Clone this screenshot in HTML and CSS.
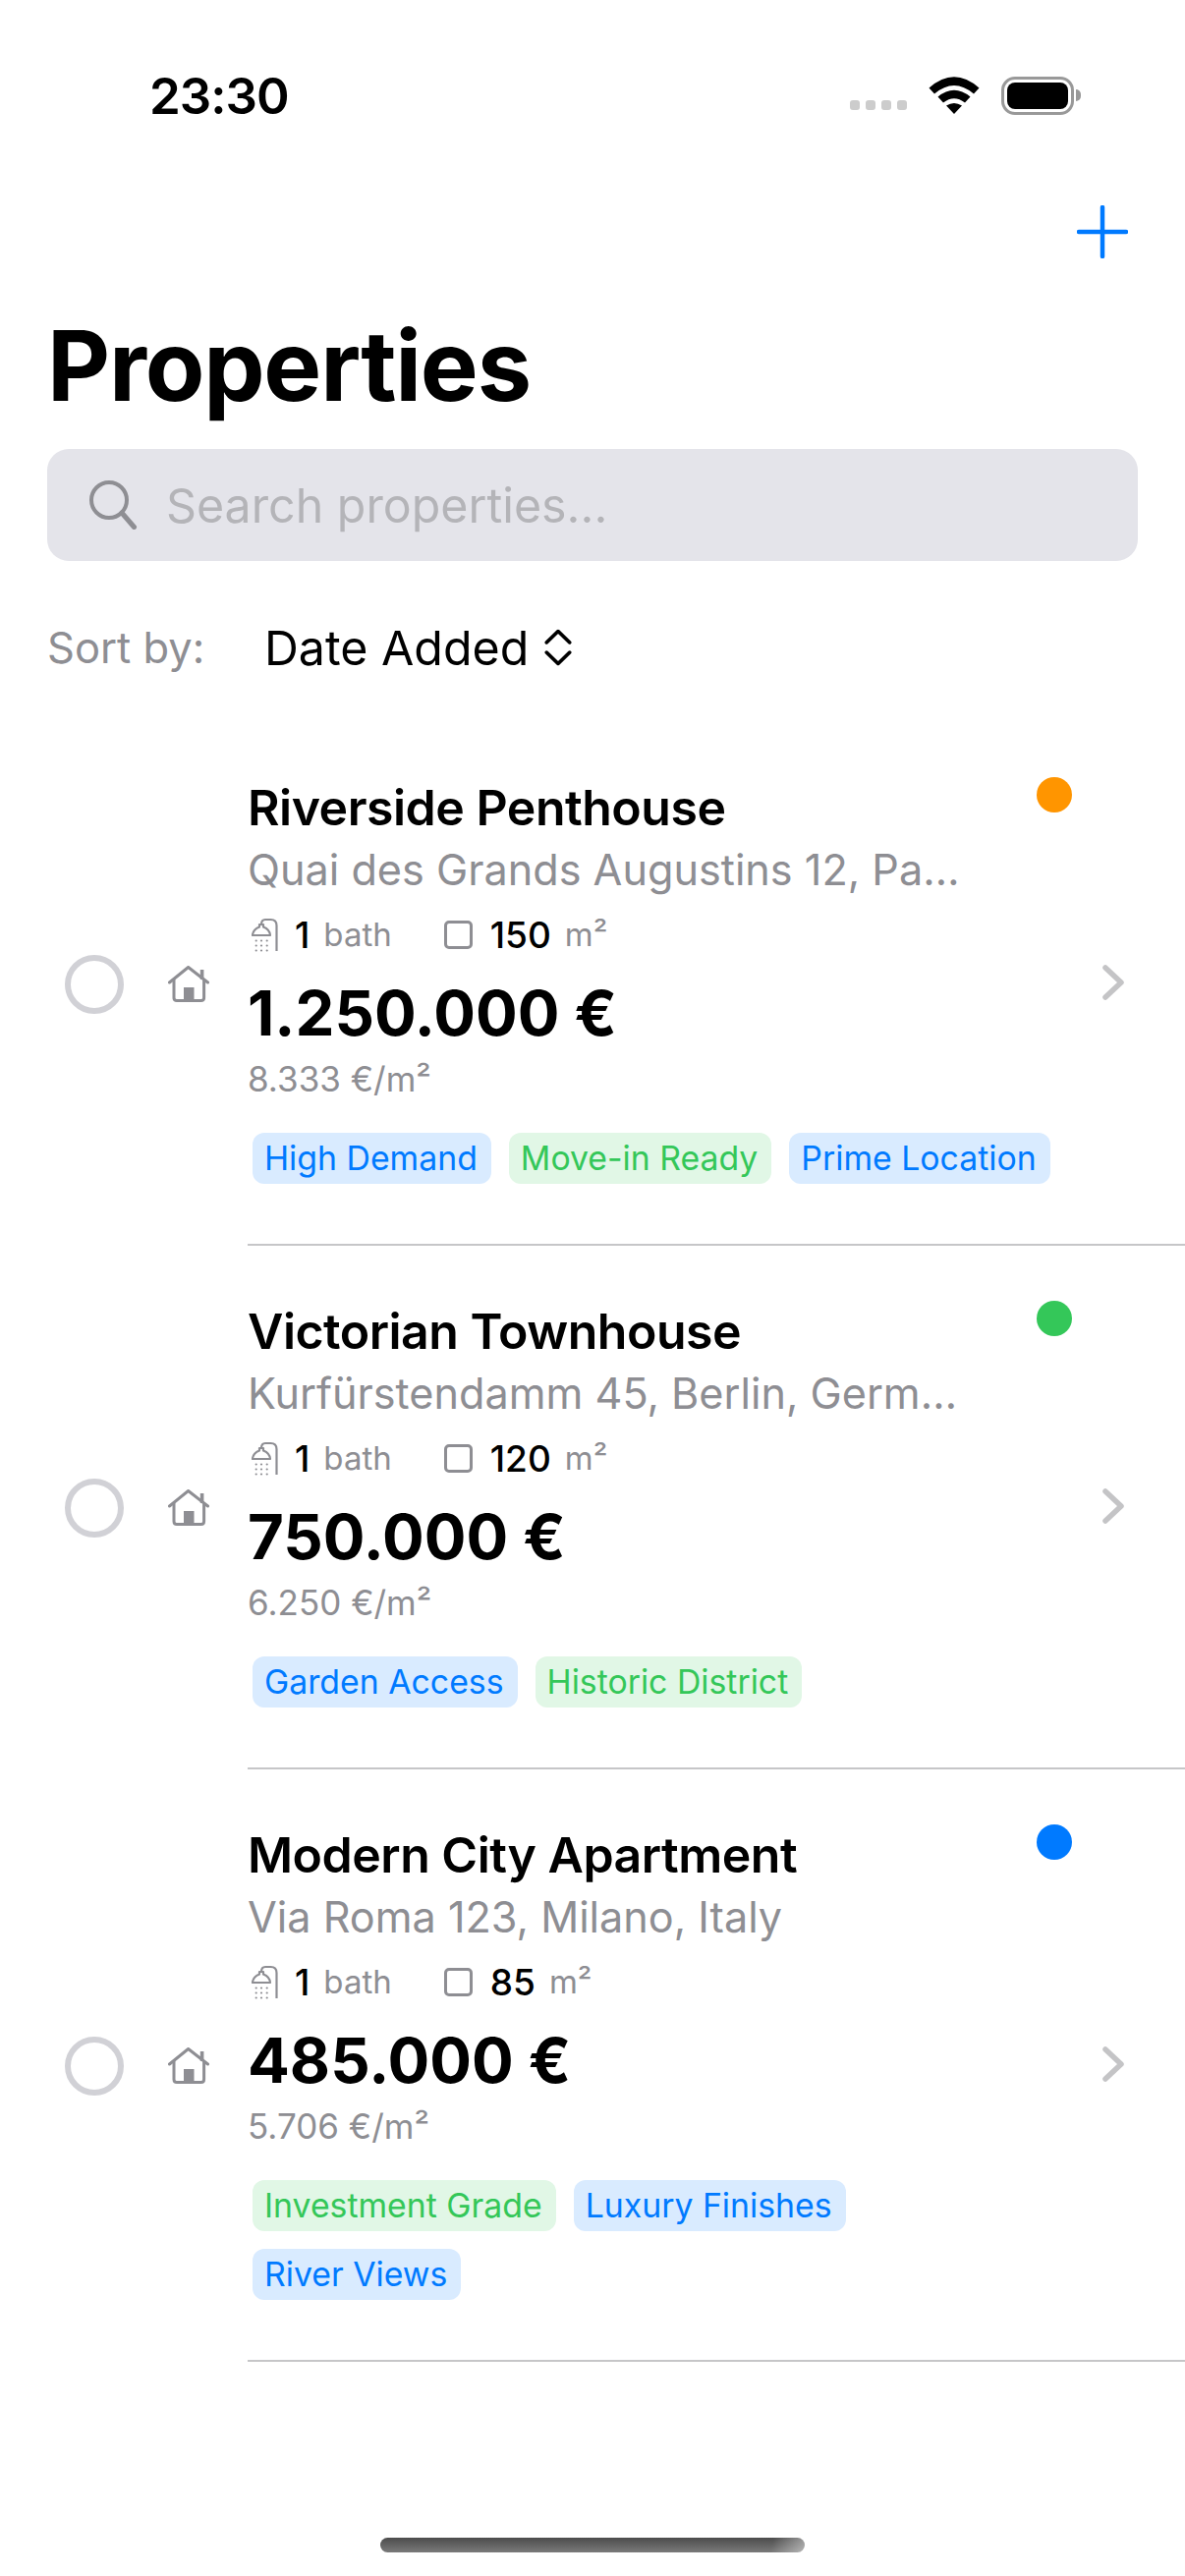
FILE: index.html
```html
<!DOCTYPE html>
<html lang="en">
<head>
    <meta charset="UTF-8">
    <meta name="viewport" content="width=device-width, initial-scale=1.0">
    <title>Properties</title>
    <link rel="stylesheet" href="styles.css">
</head>
<body>
    <svg class="defs" width="0" height="0">
        <symbol id="house" viewBox="0 0 42 37">
            <path d="M1.500 17 L20.600 1.500 L40.500 17" fill="none" stroke="currentColor" stroke-width="3" stroke-linecap="round" stroke-linejoin="round"/>
            <path d="M6 14 V32.500 Q6 35.500 9 35.500 H33.600 Q36.600 35.500 36.600 32.500 V14" fill="none" stroke="currentColor" stroke-width="3"/>
            <path d="M34.600 14 V4" fill="none" stroke="currentColor" stroke-width="3.600"/>
            <rect x="16" y="22" width="10.500" height="14" fill="currentColor"/>
        </symbol>
        <symbol id="shower" viewBox="0 0 27 36">
            <path d="M25.500 35 V9 Q25.500 3 19.500 3 H14 Q10 3 10 8" fill="none" stroke="currentColor" stroke-width="2.200"/>
            <path d="M1 19 Q1.500 13 8 10.500 V8 H12 V10.500 Q18.500 13 19 19 Z" fill="none" stroke="currentColor" stroke-width="2.200" stroke-linejoin="round"/>
            <g fill="currentColor">
                <circle cx="4.700" cy="24.500" r="1.100"/><circle cx="10" cy="24.500" r="1.100"/><circle cx="15.700" cy="24.500" r="1.100"/>
                <circle cx="4.700" cy="29.500" r="1.100"/><circle cx="10" cy="29.500" r="1.100"/><circle cx="15.700" cy="29.500" r="1.100"/>
                <circle cx="4.700" cy="34.500" r="1.100"/><circle cx="10" cy="34.500" r="1.100"/><circle cx="15.700" cy="34.500" r="1.100"/>
            </g>
        </symbol>
        <symbol id="chevron" viewBox="0 0 22 36">
            <path d="M3 3 L19 18 L3 33" fill="none" stroke="currentColor" stroke-width="5.500" stroke-linecap="round" stroke-linejoin="round"/>
        </symbol>
    </svg>

    <div class="status">
        <span class="clock">23:30</span>
        <div class="status-icons">
            <div class="signal"><i></i><i></i><i></i><i></i></div>
            <svg class="wifi" width="52" height="38" viewBox="0 0 52 38">
                <path d="M0.500 11.500 Q26 -11 51.500 11.500 L46 17.500 Q26 0.500 6 17.500 Z" fill="#000"/>
                <path d="M9.500 20.500 Q26 7 42.500 20.500 L37 26.500 Q26 18 15 26.500 Z" fill="#000"/>
                <path d="M18 29.500 Q26 24.500 34 29.500 L26 38 Z" fill="#000"/>
            </svg>
            <div class="battery"><div class="battery-fill"></div></div>
            <div class="battery-cap"></div>
        </div>
    </div>

    <div class="nav">
        <svg class="plus" width="52" height="54" viewBox="0 0 52 54">
            <path d="M26 2 V52 M2 27 H50" fill="none" stroke="#007aff" stroke-width="4.500" stroke-linecap="round"/>
        </svg>
    </div>

    <h1>Properties</h1>

    <!-- Search -->
    <div class="search">
        <svg width="50" height="50" viewBox="0 0 50 50">
            <circle cx="21" cy="20" r="18" fill="none" stroke="#8e8e93" stroke-width="4"/>
            <path d="M34 33 L46.500 47.500" fill="none" stroke="#8e8e93" stroke-width="5" stroke-linecap="round"/>
        </svg>
        <span>Search properties...</span>
    </div>

    <!-- Sort -->
    <div class="sort">
        <span class="sort-label">Sort by:</span>
        <span class="sort-value">Date Added</span>
        <svg width="30" height="38" viewBox="0 0 28 38" preserveAspectRatio="none">
            <path d="M3 14 L14 2.500 L25 14 M3 24 L14 35.500 L25 24" fill="none" stroke="#000" stroke-width="3.400" stroke-linecap="round" stroke-linejoin="round"/>
        </svg>
    </div>

    <!-- Property list -->
    <div class="list">
        <div class="row">
            <div class="radio"></div>
            <svg class="house"><use href="#house"/></svg>
            <div class="row-body">
                <div class="content">
                    <div class="title-line">
                        <div class="name">Riverside Penthouse</div>
                        <div class="dot orange"></div>
                    </div>
                    <div class="address">Quai des Grands Augustins 12, Pa…</div>
                    <div class="facts">
                        <svg class="shower"><use href="#shower"/></svg>
                        <span class="num">1</span><span class="unit bath">bath</span>
                        <div class="square"></div>
                        <span class="num">150</span><span class="unit">m²</span>
                    </div>
                    <div class="price">1.250.000 €</div>
                    <div class="per">8.333 €/m²</div>
                    <div class="tags">
                        <span class="tag blue">High Demand</span>
                        <span class="tag green">Move-in Ready</span>
                        <span class="tag blue">Prime Location</span>
                    </div>
                </div>
                <svg class="chevron"><use href="#chevron"/></svg>
            </div>
        </div>

        <div class="row">
            <div class="radio"></div>
            <svg class="house"><use href="#house"/></svg>
            <div class="row-body">
                <div class="content">
                    <div class="title-line">
                        <div class="name">Victorian Townhouse</div>
                        <div class="dot lime"></div>
                    </div>
                    <div class="address">Kurfürstendamm 45, Berlin, Germ…</div>
                    <div class="facts">
                        <svg class="shower"><use href="#shower"/></svg>
                        <span class="num">1</span><span class="unit bath">bath</span>
                        <div class="square"></div>
                        <span class="num">120</span><span class="unit">m²</span>
                    </div>
                    <div class="price">750.000 €</div>
                    <div class="per">6.250 €/m²</div>
                    <div class="tags">
                        <span class="tag blue">Garden Access</span>
                        <span class="tag green">Historic District</span>
                    </div>
                </div>
                <svg class="chevron"><use href="#chevron"/></svg>
            </div>
        </div>

        <div class="row">
            <div class="radio"></div>
            <svg class="house"><use href="#house"/></svg>
            <div class="row-body">
                <div class="content">
                    <div class="title-line">
                        <div class="name">Modern City Apartment</div>
                        <div class="dot azure"></div>
                    </div>
                    <div class="address">Via Roma 123, Milano, Italy</div>
                    <div class="facts">
                        <svg class="shower"><use href="#shower"/></svg>
                        <span class="num">1</span><span class="unit bath">bath</span>
                        <div class="square"></div>
                        <span class="num">85</span><span class="unit">m²</span>
                    </div>
                    <div class="price">485.000 €</div>
                    <div class="per">5.706 €/m²</div>
                    <div class="tags">
                        <span class="tag green">Investment Grade</span>
                        <span class="tag blue">Luxury Finishes</span>
                        <span class="tag blue">River Views</span>
                    </div>
                </div>
                <svg class="chevron"><use href="#chevron"/></svg>
            </div>
        </div>
    </div>

    <div class="home-bar"></div>
</body>
</html>
```
FILE: styles.css
```css
body {
    font-family: Inter, "Liberation Sans", sans-serif;
    margin: 0;
    padding: 0;
    width: 1206px;
    height: 2622px;
    overflow: hidden;
    position: relative;
    background-color: #fff;
    color: #000;
}
.defs {
    position: absolute;
}

/* Status bar */
.status {
    display: flex;
    justify-content: space-between;
    align-items: center;
    height: 118px;
    padding: 76px 106px 0 152px;
    box-sizing: border-box;
}
.clock {
    font-size: 51px;
    font-weight: 600;
    letter-spacing: -1px;
}
.status-icons {
    display: flex;
    align-items: center;
}
.signal {
    display: flex;
    gap: 6px;
    margin: 19px 22px 0 0;
}
.signal i {
    width: 10px;
    height: 10px;
    border-radius: 3px;
    background-color: #ccc;
}
.wifi {
    margin-right: 22px;
}
.battery {
    width: 74px;
    height: 39px;
    box-sizing: border-box;
    padding: 3px;
    border: 3px solid #999;
    border-radius: 14px;
}
.battery-fill {
    height: 100%;
    background-color: #000;
    border-radius: 8px;
}
.battery-cap {
    width: 5px;
    height: 12px;
    margin-left: 2px;
    background-color: #999;
    border-radius: 0 5px 5px 0;
}

/* Nav */
.nav {
    display: flex;
    justify-content: flex-end;
    padding: 91px 58px 0 0;
}
.plus {
    display: block;
}
h1 {
    font-size: 99px;
    font-weight: 700;
    line-height: 110px;
    letter-spacing: -1.2px;
    margin: 54px 0 0 48px;
}

/* Search */
.search {
    display: flex;
    align-items: center;
    height: 114px;
    margin: 30px 48px 0;
    padding-left: 42px;
    background-color: #e4e4ea;
    border-radius: 22px;
    font-size: 48.3px;
    color: #b4b4b8;
}
.search svg {
    margin-right: 29px;
}

/* Sort */
.sort {
    display: flex;
    align-items: center;
    height: 60px;
    margin: 58px 0 0 48px;
}
.sort-label {
    width: 221px;
    font-size: 43.5px;
    color: #8e8e93;
}
.sort-value {
    font-size: 48.3px;
    margin-right: 15px;
}

/* List rows */
.list {
    margin-top: 46px;
}
.row {
    display: flex;
    align-items: center;
}
.radio {
    width: 60px;
    height: 60px;
    box-sizing: border-box;
    flex: none;
    margin-left: 66px;
    border: 6px solid #d1d1d6;
    border-radius: 50%;
}
.house {
    width: 42px;
    height: 37px;
    flex: none;
    margin-left: 45px;
    margin-right: 39px;
    color: #8e8e93;
}
.row-body {
    flex: 1;
    display: flex;
    align-items: center;
    min-width: 0;
    padding: 59px 0 61px;
    border-bottom: 2px solid #c6c6c8;
}
.content {
    flex: 1;
    min-width: 0;
}
.chevron {
    width: 22px;
    height: 36px;
    flex: none;
    margin: 0 62px 0 31px;
    color: #c4c4c6;
}
.title-line {
    display: flex;
    justify-content: space-between;
    align-items: flex-start;
}
.name {
    font-size: 50px;
    font-weight: 600;
    line-height: 56px;
    letter-spacing: -0.5px;
}
.dot {
    width: 36px;
    height: 36px;
    margin-top: -3px;
    border-radius: 50%;
}
.orange {
    background-color: #ff9500;
}
.lime {
    background-color: #34c759;
}
.azure {
    background-color: #007aff;
}
.address {
    font-size: 43.2px;
    line-height: 52px;
    margin-top: 9px;
    color: #8e8e93;
}
.facts {
    display: flex;
    align-items: center;
    height: 40px;
    margin-top: 20px;
}
.shower {
    width: 27px;
    height: 36px;
    margin-left: 4px;
    margin-right: 17px;
    color: #8e8e93;
}
.num {
    font-size: 37px;
    font-weight: 500;
}
.unit {
    font-size: 33px;
    margin-left: 14px;
    color: #8e8e93;
}
.bath {
    margin-right: 53px;
}
.square {
    width: 29px;
    height: 29px;
    box-sizing: border-box;
    margin-right: 18px;
    border: 3px solid #8e8e93;
    border-radius: 5px;
}
.price {
    font-size: 63.4px;
    font-weight: 700;
    line-height: 74px;
    margin-top: 23px;
}
.per {
    font-size: 35px;
    line-height: 42px;
    margin-top: 9px;
    color: #8e8e93;
}
.tags {
    display: flex;
    flex-wrap: wrap;
    gap: 18px 18px;
    margin: 34px 10px 0 5px;
}
.tag {
    height: 52px;
    line-height: 52px;
    padding: 0 14px 0 12px;
    font-size: 33.8px;
    border-radius: 12px;
}
.tag.blue {
    color: #007aff;
    background-color: #d9ebff;
}
.tag.green {
    color: #34c759;
    background-color: #e1f7e6;
}

.home-bar {
    position: absolute;
    left: 387px;
    top: 2583px;
    width: 432px;
    height: 15px;
    border-radius: 8px;
    background: linear-gradient(100deg, transparent 92%, rgba(255, 255, 255, 0.45)), linear-gradient(to bottom, #4c4c4c, #7a7a7a);
}
```
